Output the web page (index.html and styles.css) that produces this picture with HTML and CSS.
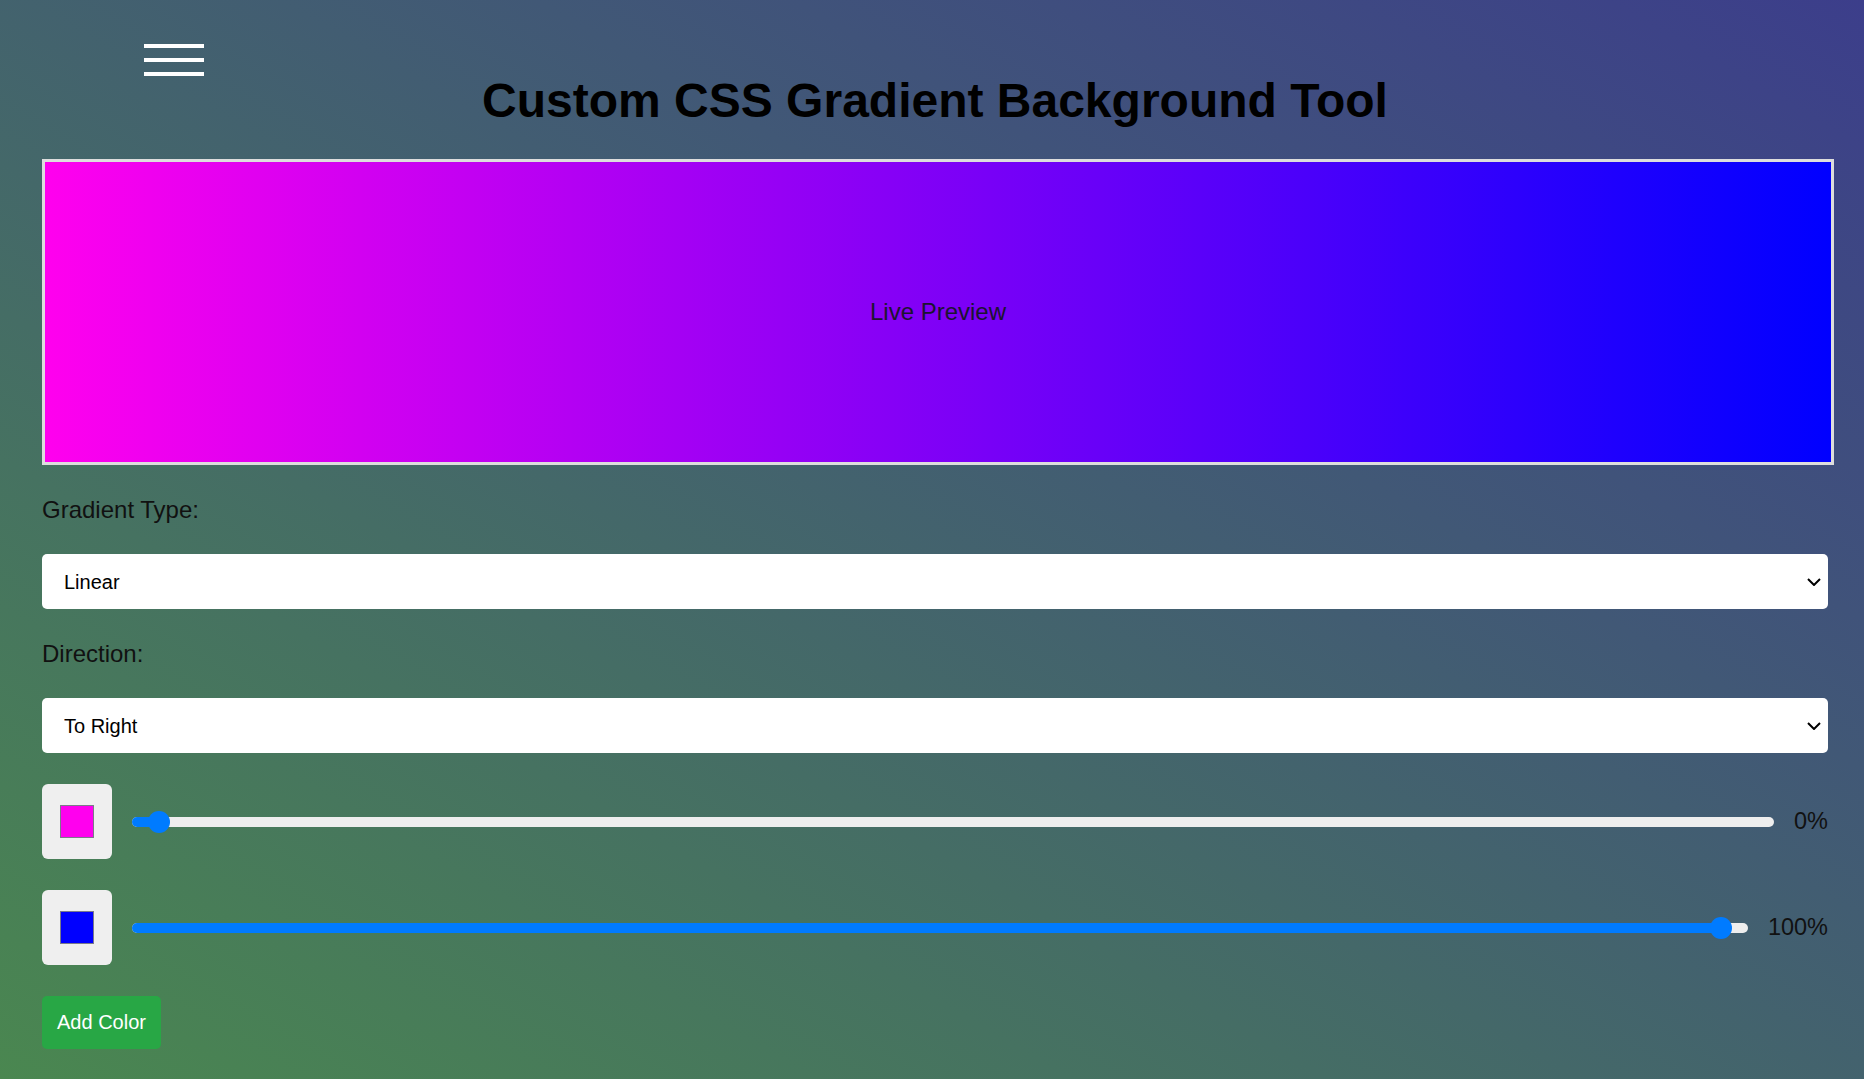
FILE: index.html
```html
<!DOCTYPE html>
<html lang="en">
<head>
<meta charset="utf-8">
<title>Custom CSS Gradient Background Tool</title>
<link rel="stylesheet" href="styles.css">
</head>
<body>
<main class="app">
  <header class="header">
    <button class="menu-toggle" aria-label="Menu"><span></span><span></span><span></span></button>
    <h1 class="title">Custom CSS Gradient Background Tool</h1>
  </header>

  <div class="preview">Live Preview</div>

  <label class="field-label" for="type">Gradient Type:</label>
  <div class="select-wrap">
    <select id="type" class="field-select">
      <option>Linear</option>
      <option>Radial</option>
    </select>
    <svg class="chevron" width="14" height="8" viewBox="0 0 14 8"><path d="M1 1l6 6 6-6" fill="none" stroke="#000" stroke-width="2"/></svg>
  </div>

  <label class="field-label" for="dir">Direction:</label>
  <div class="select-wrap">
    <select id="dir" class="field-select">
      <option>To Right</option>
      <option>To Left</option>
      <option>To Top</option>
      <option>To Bottom</option>
    </select>
    <svg class="chevron" width="14" height="8" viewBox="0 0 14 8"><path d="M1 1l6 6 6-6" fill="none" stroke="#000" stroke-width="2"/></svg>
  </div>

  <div class="stop-row">
    <span class="swatch"><span class="swatch-color swatch-magenta"></span></span>
    <div class="range" style="--p: 0">
      <div class="range-track"><div class="range-fill"></div></div>
      <div class="range-thumb"></div>
    </div>
    <span class="stop-value">0%</span>
  </div>

  <div class="stop-row">
    <span class="swatch"><span class="swatch-color swatch-blue"></span></span>
    <div class="range" style="--p: 1">
      <div class="range-track"><div class="range-fill"></div></div>
      <div class="range-thumb"></div>
    </div>
    <span class="stop-value">100%</span>
  </div>

  <button class="add-btn">Add Color</button>
</main>
</body>
</html>
```

FILE: styles.css
```css
html, body {
  margin: 0;
  padding: 0;
}

body {
  min-height: 100vh;
  background: linear-gradient(to top right, #4a8750, #3c3e8b);
  font-family: "Liberation Sans", Arial, sans-serif;
  color: #111;
}

.app {
  display: flex;
  flex-direction: column;
  gap: 31px;
  padding: 44px 36px 30px 42px;
}

.header {
  display: grid;
}

.menu-toggle {
  grid-area: 1 / 1;
  justify-self: start;
  align-self: start;
  margin-left: 102px;
  padding: 0;
  border: none;
  background: none;
  display: flex;
  flex-direction: column;
  gap: 10px;
  cursor: pointer;
}

.menu-toggle span {
  display: block;
  width: 60px;
  height: 4px;
  background: #fff;
}

.title {
  grid-area: 1 / 1;
  margin: 29px 0 0;
  font-size: 48px;
  line-height: 55px;
  font-weight: bold;
  text-align: center;
  color: #000;
}

.preview {
  width: 100%;
  height: 300px;
  border: 3px solid #dddddd;
  background: linear-gradient(to right, #ff00ee, #0000ff);
  display: flex;
  align-items: center;
  justify-content: center;
  font-size: 24px;
  color: #1c1430;
}

.field-label {
  font-size: 24px;
  line-height: 27px;
  color: #111;
}

.select-wrap {
  position: relative;
}

.field-select {
  -webkit-appearance: none;
  appearance: none;
  display: block;
  width: 100%;
  height: 55px;
  margin: 0;
  padding: 0 40px 0 22px;
  border: none;
  border-radius: 5px;
  background: #fff;
  font-family: "Liberation Sans", Arial, sans-serif;
  font-size: 20px;
  color: #000;
}

.chevron {
  position: absolute;
  right: 7px;
  top: 24px;
  pointer-events: none;
}

.stop-row {
  display: flex;
  align-items: center;
  gap: 20px;
}

.swatch {
  flex: none;
  width: 70px;
  height: 75px;
  border-radius: 6px;
  background: #efefef;
  display: flex;
  align-items: center;
  justify-content: center;
}

.swatch-color {
  width: 34px;
  height: 33px;
  box-sizing: border-box;
  border: 1px solid #7a7a8a;
}

.swatch-magenta { background: #ff00ee; }
.swatch-blue { background: #0000ff; }

.range {
  position: relative;
  flex: 1;
  height: 22px;
  display: flex;
  align-items: center;
}

.range-track {
  width: 100%;
  height: 10px;
  border-radius: 5px;
  background: #eeeeee;
  overflow: hidden;
}

.range-fill {
  height: 100%;
  width: calc(27px + var(--p) * (100% - 54px));
  background: #007bff;
}

.range-thumb {
  position: absolute;
  top: 0;
  left: calc(16px + var(--p) * (100% - 54px));
  width: 22px;
  height: 22px;
  border-radius: 50%;
  background: #007bff;
}

.stop-value {
  flex: none;
  font-size: 23.5px;
  color: #111;
  white-space: nowrap;
}

.add-btn {
  align-self: flex-start;
  border: none;
  border-radius: 5px;
  background: #28a745;
  color: #fff;
  font-family: "Liberation Sans", Arial, sans-serif;
  font-size: 20px;
  line-height: 23px;
  padding: 15px;
  cursor: pointer;
}
```
